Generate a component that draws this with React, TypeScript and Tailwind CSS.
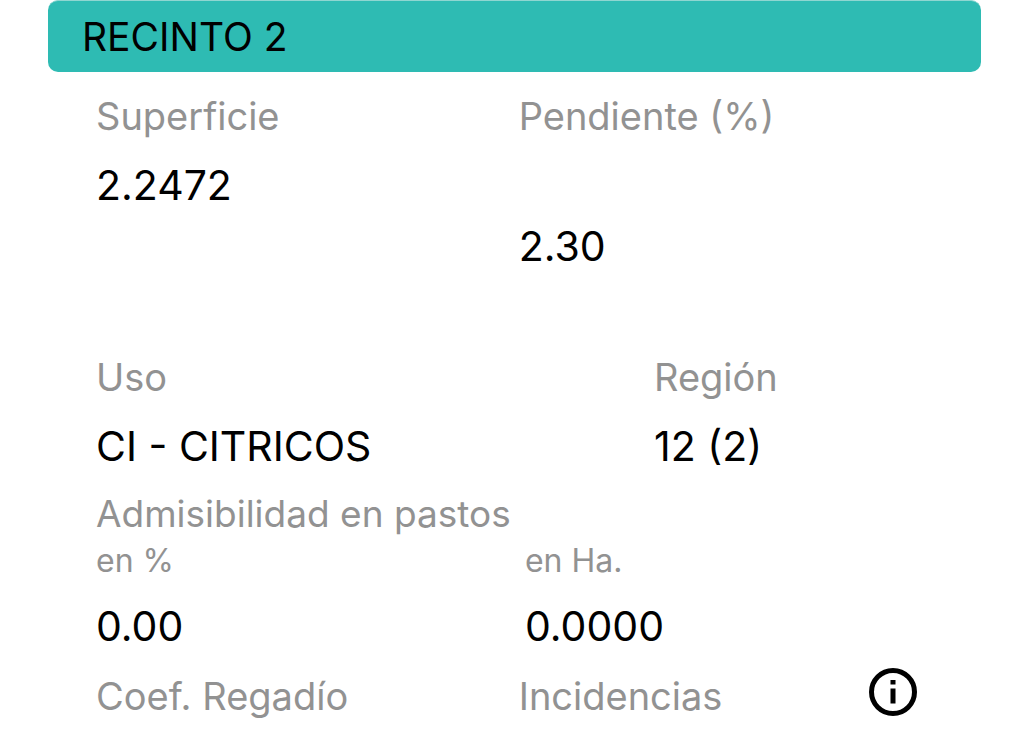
const label = "text-[#929292] text-[38px] leading-[48px]";
const unit = "text-[#929292] text-[32px] leading-[40px]";
const value = "text-black text-[41px] leading-[52px]";

function InfoIcon() {
  return (
    <svg className="size-12" viewBox="0 0 48 48" fill="none" stroke="currentColor" strokeWidth="5" aria-hidden="true">
      <circle cx="24" cy="24" r="21.5" />
      <path d="M24 20.5v15M24 12v4.5" />
    </svg>
  );
}

export default function App() {
  return (
    <main className="bg-white px-12 pb-4 font-['Inter','Liberation_Sans',sans-serif]">
      <h1 className="rounded-[10px] border-t border-[#8fd6d1] bg-[#2ebbb3] px-[34px] pt-3 pb-[11px] text-[39px] leading-[48px] text-black">
        RECINTO 2
      </h1>

      <div className="px-12 pt-5">
        <dl className="grid grid-cols-[101fr_99fr]">
          <div>
            <dt className={label}>Superficie</dt>
            <dd className={`${value} mt-[19px]`}>2.2472</dd>
          </div>
          <div>
            <dt className={label}>Pendiente (%)</dt>
            <dd className={`${value} mt-20`}>2.30</dd>
          </div>
        </dl>

        <dl className="mt-[81px] grid grid-cols-[2fr_1fr]">
          <div>
            <dt className={label}>Uso</dt>
            <dd className={`${value} mt-[19px]`}>CI - CITRICOS</dd>
          </div>
          <div>
            <dt className={label}>Región</dt>
            <dd className={`${value} mt-[19px]`}>12 (2)</dd>
          </div>
        </dl>

        <h2 className="mt-[18px] text-[37px] leading-[48px] text-[#929292]">Admisibilidad en pastos</h2>
        <dl className="mt-[3px] grid grid-cols-[41fr_39fr]">
          <div>
            <dt className={unit}>en %</dt>
            <dd className={`${value} mt-[19px]`}>0.00</dd>
          </div>
          <div>
            <dt className={unit}>en Ha.</dt>
            <dd className={`${value} mt-[19px]`}>0.0000</dd>
          </div>
        </dl>

        <div className="mt-4 grid grid-cols-[101fr_99fr]">
          <p className={`${label} pt-1`}>Coef. Regadío</p>
          <div className="flex items-start justify-between pr-4">
            <p className={`${label} pt-1`}>Incidencias</p>
            <button type="button" aria-label="Información de incidencias" className="text-black">
              <InfoIcon />
            </button>
          </div>
        </div>
      </div>
    </main>
  );
}
